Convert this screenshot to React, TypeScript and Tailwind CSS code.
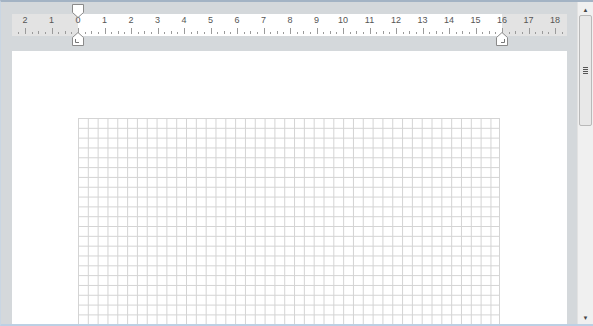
import React from "react";

const UNIT = 26.5;
const ORIGIN = 66;
const RULER_W = 555;

function RulerDrawing() {
  const ticks: React.ReactNode[] = [];
  for (let q = -9; q <= 19 * 4; q++) {
    const x = ORIGIN + (q * UNIT) / 4;
    if (x < 2 || x > RULER_W - 2) continue;
    const m = ((q % 4) + 4) % 4;
    let h = 2;
    if (m === 0) h = 6;
    else if (m === 2) h = 3;
    const xx = Math.round(x) + 0.5;
    ticks.push(
      <line key={"t" + q} x1={xx} x2={xx} y1={20 - h} y2={20} stroke="#9a9a9a" strokeWidth={1} />
    );
  }
  const labels: React.ReactNode[] = [];
  for (let i = -2; i <= 18; i++) {
    const x = ORIGIN + i * UNIT;
    labels.push(
      <text
        key={"l" + i}
        x={x}
        y={9}
        textAnchor="middle"
        fontSize={9}
        fill="#555"
        fontFamily="'Liberation Sans', Arial, sans-serif"
      >
        {Math.abs(i)}
      </text>
    );
  }
  return (
    <svg className="absolute left-0 top-0" width={RULER_W} height={22}>
      {ticks}
      {labels}
    </svg>
  );
}

function DownMarker() {
  return (
    <svg width={12} height={14} viewBox="0 0 12 14">
      <path d="M0.5 0.5 H11.5 V8.5 L6 13.5 L0.5 8.5 Z" fill="#fff" stroke="#8a8a8a" />
    </svg>
  );
}

function UpMarker({ right }: { right?: boolean }) {
  return (
    <svg width={12} height={14} viewBox="0 0 12 14">
      <path d="M6 0.5 L11.5 5.5 V13.5 H0.5 V5.5 Z" fill="#fff" stroke="#8a8a8a" />
      {right ? (
        <path d="M8.5 7 V10.5 H5" fill="none" stroke="#777" />
      ) : (
        <path d="M3.5 7 V10.5 H7" fill="none" stroke="#777" />
      )}
    </svg>
  );
}

function Grid() {
  const w = 422;
  const h = 210;
  const step = 9.82;
  const lines: React.ReactNode[] = [];
  for (let i = 0; i <= 43; i++) {
    const x = Math.min(i * step + 0.5, w - 0.5);
    lines.push(<line key={"v" + i} x1={x} x2={x} y1={0} y2={h} stroke="#d4d4d4" strokeWidth={1} />);
  }
  for (let j = 0; j * step < h; j++) {
    const y = j * step + 0.5;
    lines.push(<line key={"h" + j} x1={0} x2={w} y1={y} y2={y} stroke="#d4d4d4" strokeWidth={1} />);
  }
  return (
    <svg width={w} height={h} className="block">
      {lines}
    </svg>
  );
}

export default function App() {
  return (
    <div className="w-[593px] h-[326px] overflow-hidden bg-[#d4d8db] border-t-2 border-t-[#a3b3c4] border-b-2 border-b-[#bcd0e4] border-l border-l-[#c9d6e3] flex font-['Liberation_Sans',Arial,sans-serif]">
      <div className="flex flex-col pl-[11px] w-[576px]">
        <div className="relative mt-[12px] h-[22px] w-[555px] flex">
          <div className="w-[66px] h-full bg-[#e3e3e3]" />
          <div className="w-[424px] h-full bg-white" />
          <div className="flex-1 h-full bg-[#e3e3e3]" />
          <RulerDrawing />
          <div className="absolute left-[60px] top-[-10px] leading-none">
            <DownMarker />
          </div>
          <div className="absolute left-[60px] top-[18px] leading-none">
            <UpMarker />
          </div>
          <div className="absolute left-[484px] top-[18px] leading-none">
            <UpMarker right />
          </div>
        </div>
        <div className="mt-[15px] w-[555px] flex-1 bg-white pt-[67px] pl-[66px] overflow-hidden">
          <Grid />
        </div>
      </div>
      <div className="w-[16px] h-full bg-[#f0f0f0] border-l border-[#e2e2e2] flex flex-col items-center">
        <div className="h-[13px] flex items-center justify-center text-[6px] text-[#444] leading-none pt-[2px]">▲</div>
        <div className="w-[13px] h-[111px] bg-[#e8e8e8] border border-[#b9b9b9] rounded-[2px] flex items-center justify-center">
          <div className="flex flex-col gap-[1px]">
            <div className="w-[5px] h-[1px] bg-[#555]" />
            <div className="w-[5px] h-[1px] bg-[#555]" />
            <div className="w-[5px] h-[1px] bg-[#555]" />
            <div className="w-[5px] h-[1px] bg-[#555]" />
          </div>
        </div>
        <div className="flex-1" />
        <div className="h-[12px] flex items-center justify-center text-[6px] text-[#444] leading-none">▼</div>
      </div>
    </div>
  );
}
